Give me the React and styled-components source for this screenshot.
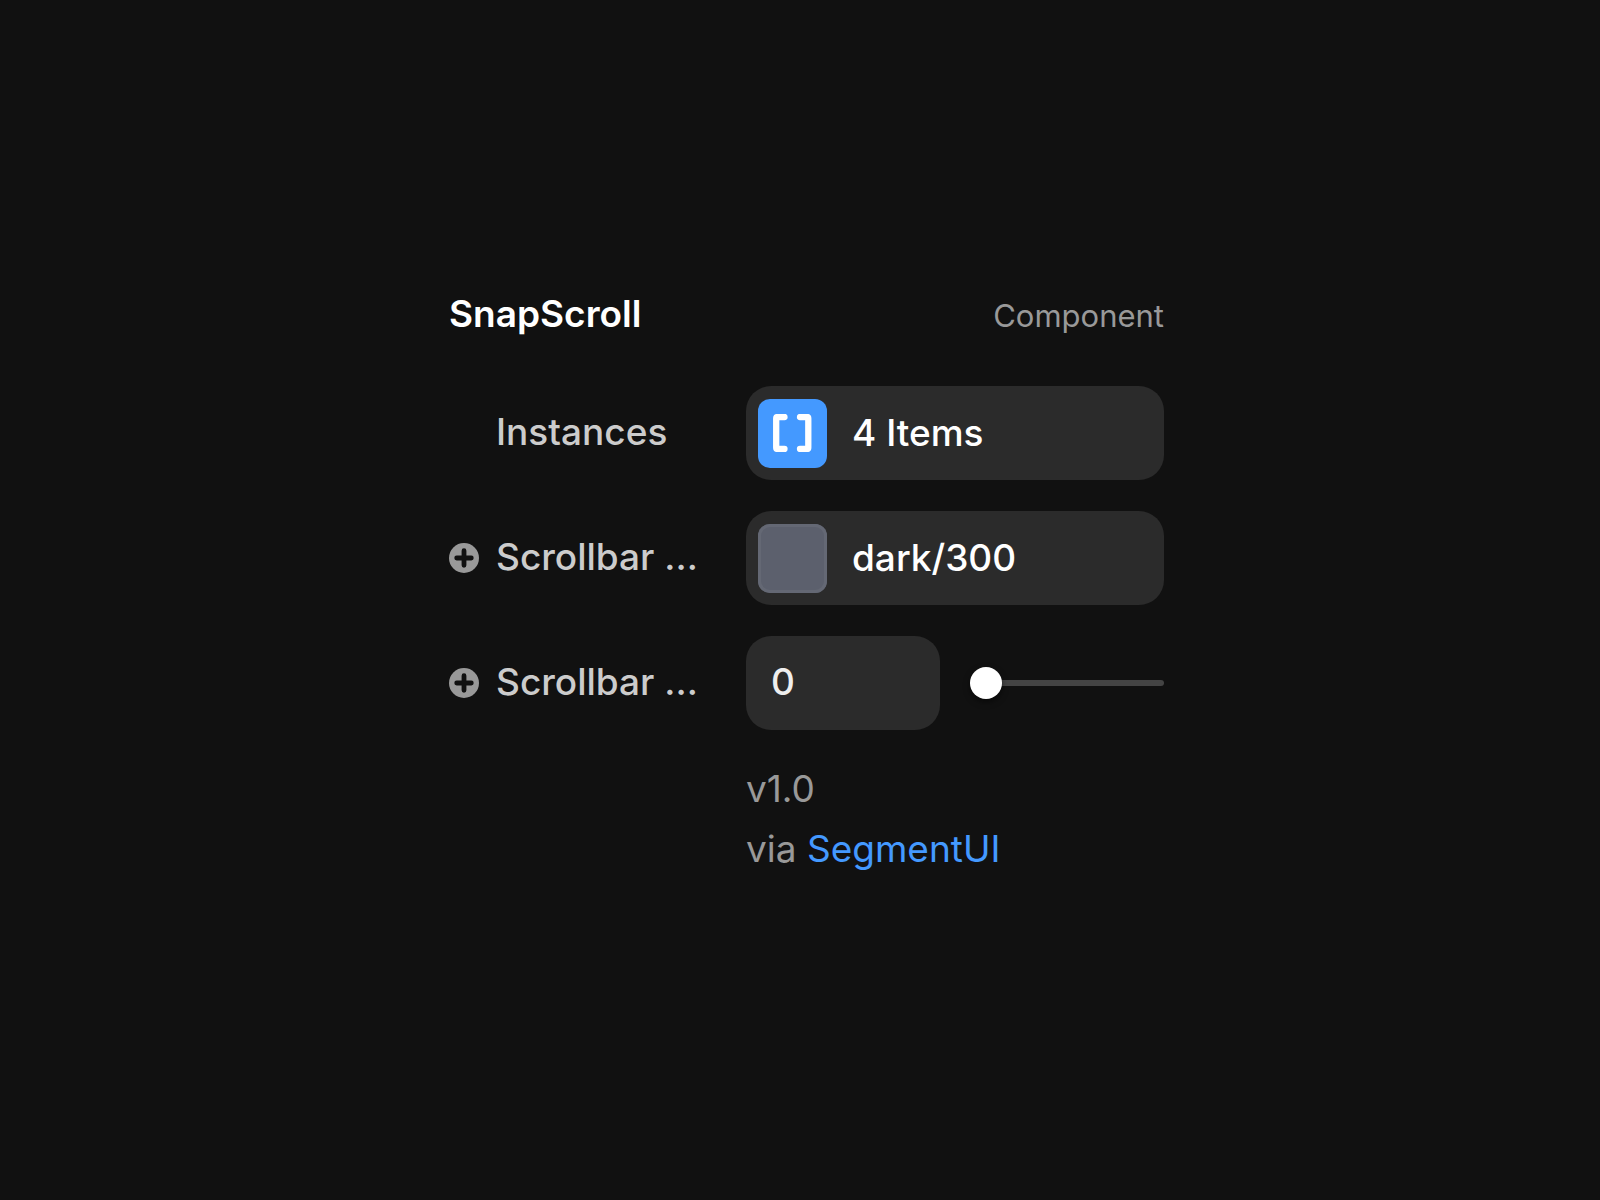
import { useState } from "react";
import styled, { createGlobalStyle } from "styled-components";

const GlobalStyle = createGlobalStyle`
  * {
    box-sizing: border-box;
  }
  body {
    margin: 0;
    background-color: #111;
    font-family: Inter, "Liberation Sans", sans-serif;
    font-size: 37px;
    line-height: 46px;
  }
`;
const Page = styled.main`
  min-height: 100vh;
  display: flex;
  justify-content: center;
  align-items: center;
  padding: 0 0 30px 13px;
`;
const Panel = styled.section`
  width: 100%;
  max-width: 715px;
`;
const Header = styled.header`
  display: flex;
  justify-content: space-between;
  align-items: baseline;
  margin-bottom: 49px;
`;
const Title = styled.h1`
  margin: 0;
  font-size: 37px;
  font-weight: 600;
  color: #fff;
`;
const Kind = styled.span`
  font-size: 31px;
  line-height: 38px;
  color: #999;
`;
const Rows = styled.div`
  display: grid;
  gap: 31px;
`;
const Row = styled.div`
  display: grid;
  grid-template-columns: 30px 233px 1fr;
  column-gap: 17px;
  align-items: center;
`;
const AddBtn = styled.button`
  display: flex;
  padding: 0;
  border: none;
  background: none;
  color: #999;
  cursor: pointer;
`;
const Label = styled.label`
  grid-column: 2;
  padding-bottom: 2px;
  white-space: nowrap;
  font-weight: 500;
  color: #ccc;
`;
const Field = styled.button`
  display: flex;
  align-items: center;
  gap: 25px;
  height: 94px;
  padding: 0 12px;
  border: none;
  border-radius: 25px;
  background-color: #2b2b2b;
  color: #fff;
  font: inherit;
  font-weight: 500;
  cursor: pointer;
`;
const Swatch = styled.span`
  display: flex;
  justify-content: center;
  align-items: center;
  width: 69px;
  height: 69px;
  border-radius: 12px;
  background-color: ${(props) => props.$color};
  box-shadow: inset 0 0 0 3px ${(props) => props.$edge || "transparent"};
`;
const Split = styled.div`
  display: grid;
  grid-template-columns: 1fr 1fr;
  gap: 30px;
  align-items: center;
`;
const NumberInput = styled.input`
  width: 100%;
  height: 94px;
  padding: 0 25px 4px;
  border: none;
  border-radius: 25px;
  background-color: #2b2b2b;
  color: #eee;
  font: inherit;
  font-weight: 500;
  &:focus {
    outline: none;
  }
`;
const Slider = styled.input`
  appearance: none;
  width: 100%;
  height: 32px;
  margin: 0;
  background: none;
  cursor: pointer;
  &::-webkit-slider-runnable-track {
    height: 6px;
    border-radius: 3px;
    background-color: #444;
  }
  &::-webkit-slider-thumb {
    appearance: none;
    width: 32px;
    height: 32px;
    margin-top: -13px;
    border-radius: 50%;
    background-color: #fff;
    box-shadow: 0 3px 6px rgb(0, 0, 0, 0.5);
  }
`;
const Footer = styled.footer`
  margin: 29px 0 0 297px;
  line-height: 60px;
  color: #999;
`;
const Line = styled.p`
  margin: 0;
`;
const A = styled.a`
  color: #49f;
  text-decoration: none;
`;

function PlusIcon() {
  return (
    <svg width="30" height="30" viewBox="0 0 30 30" aria-hidden="true">
      <circle cx="15" cy="15" r="15" fill="currentColor" />
      <path
        d="M15 7.700v14.600M7.700 15h14.600"
        stroke="#111"
        strokeWidth="4.800"
        strokeLinecap="round"
      />
    </svg>
  );
}

function BracketsIcon() {
  return (
    <svg width="39" height="38" viewBox="0 0 39 38" aria-hidden="true">
      <path
        d="M11.500 3H4.500Q3.200 3 3.200 4.500v29Q3.200 35 4.500 35H11.500M27 3h7Q35.300 3 35.300 4.500v29Q35.300 35 34 35H27"
        fill="none"
        stroke="#fff"
        strokeWidth="6.300"
        strokeLinecap="round"
      />
    </svg>
  );
}

export default function App() {
  const [value, setValue] = useState(0);

  return (
    <>
      <GlobalStyle />
      <Page>
        <Panel>
          <Header>
            <Title>SnapScroll</Title>
            <Kind>Component</Kind>
          </Header>
          <Rows>
            <Row>
              <Label htmlFor="instances">Instances</Label>
              <Field id="instances" type="button">
                <Swatch $color="#49f">
                  <BracketsIcon />
                </Swatch>
                4 Items
              </Field>
            </Row>
            <Row>
              <AddBtn type="button">
                <PlusIcon />
              </AddBtn>
              <Label htmlFor="color">Scrollbar …</Label>
              <Field id="color" type="button">
                <Swatch $color="#5c606d" $edge="#646874" />
                dark/300
              </Field>
            </Row>
            <Row>
              <AddBtn type="button">
                <PlusIcon />
              </AddBtn>
              <Label htmlFor="size" id="size-label">
                Scrollbar …
              </Label>
              <Split>
                <NumberInput
                  id="size"
                  type="text"
                  inputMode="numeric"
                  value={value}
                  onChange={(e) => setValue(Number(e.target.value) || 0)}
                />
                <Slider
                  type="range"
                  min="0"
                  max="100"
                  aria-labelledby="size-label"
                  value={value}
                  onChange={(e) => setValue(Number(e.target.value))}
                />
              </Split>
            </Row>
          </Rows>
          <Footer>
            <Line>v1.0</Line>
            <Line>
              via <A href="#segmentui">SegmentUI</A>
            </Line>
          </Footer>
        </Panel>
      </Page>
    </>
  );
}
